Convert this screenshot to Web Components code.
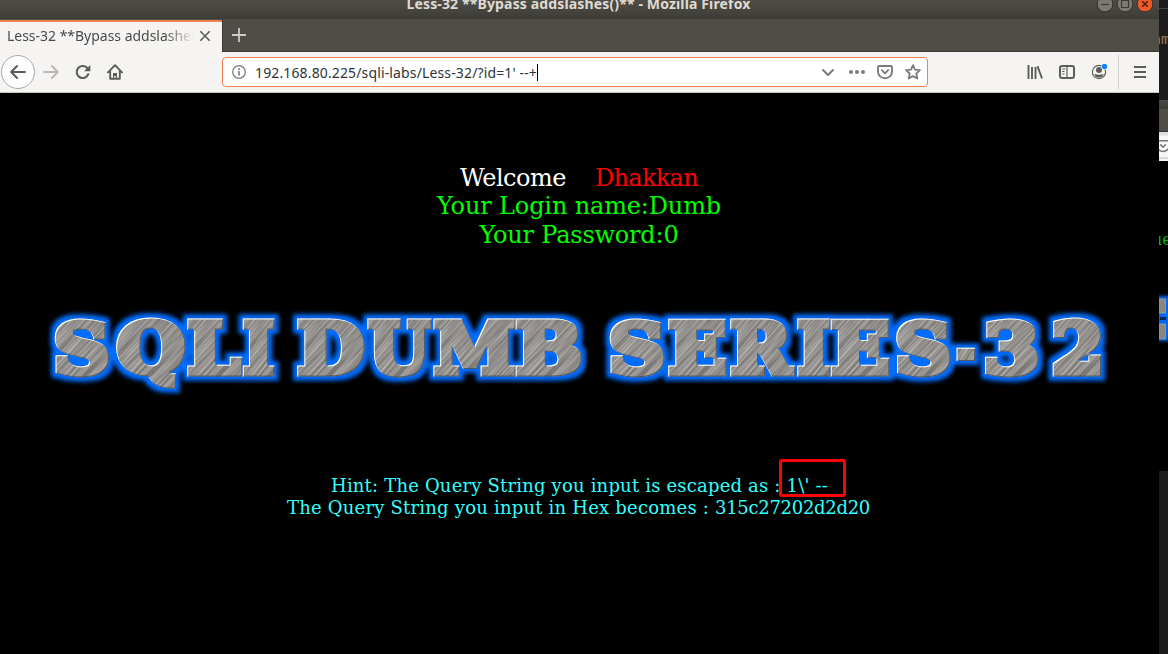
<!DOCTYPE html>
<html lang="en"><head><meta charset="utf-8"><title>Less-32 **Bypass addslashes()**</title>
<style>html,body{margin:0;background:#000;overflow:hidden}body{font-family:"Noto Sans","Open Sans",sans-serif}</style></head>
<body><lab-desktop></lab-desktop>
<script>
const define = (name, html, ready) => customElements.define(name, class extends HTMLElement {
  connectedCallback() {
    if (this.shadowRoot) return;
    const t = document.createElement('template'); t.innerHTML = html;
    this.attachShadow({mode:'open'}).append(t.content.cloneNode(true));
    if (ready) ready(this, this.shadowRoot);
  }
});

/* One line of text, tracked so that it fills the given width. */
define('fit-line', `<style>:host{display:inline-block;white-space:pre;flex:none}span{display:inline-block;white-space:pre}</style><span><slot></slot></span>`, (host, root) => {
  const s = root.querySelector('span'), want = +host.getAttribute('width');
  s.style.letterSpacing = ((want - s.getBoundingClientRect().width) / host.textContent.length) + 'px';
});

define('title-bar', `<style>
:host{display:grid;grid-template-columns:1fr auto;height:19px;background:linear-gradient(#504d46,#3d3c37);overflow:hidden;position:relative}
.name{grid-area:1/1/2/3;justify-self:center;margin:-7px 2px 0 0;font-weight:700;font-size:14px;line-height:22px;color:#dfdbd2}
.btns{grid-area:1/2;display:flex;gap:2px;margin:-5px 5px 0 0}
svg{width:18px;height:18px;display:block}
</style><div class="name"><fit-line width="344">Less-32 **Bypass addslashes()** - Mozilla Firefox</fit-line></div>
<div class="btns">
<svg viewBox="0 0 18 18"><circle cx="9" cy="9" r="7.9" fill="#7b7974" stroke="#33322e"/><path d="M5 9.5h8" stroke="#3c3b37" stroke-width="1.2"/></svg>
<svg viewBox="0 0 18 18"><circle cx="9" cy="9" r="7.9" fill="#7b7974" stroke="#33322e"/><path d="M5.5 5.5h7v7h-7z" fill="none" stroke="#3c3b37" stroke-width="1.2"/></svg>
<svg viewBox="0 0 18 18"><circle cx="9" cy="9" r="7.9" fill="#ee5b2b" stroke="#33322e"/><path d="m6.2 6.2 5.6 5.6m0-5.6-5.6 5.6" stroke="#492012" stroke-width="1.5"/></svg></div>`);

define('tab-strip', `<style>
:host{display:flex;height:33px;background:#504d46;box-shadow:inset 0 -1px #3c3b37}
.tab{width:222px;box-sizing:border-box;border-top:2px solid #f1814f;background:#f5f4f2;display:flex;align-items:center;padding-left:7px;margin-top:1px;height:32px}
.clip{width:187px;overflow:hidden;font-size:14px;line-height:20px;margin-top:-2px;color:#4b4b4b;-webkit-mask-image:linear-gradient(90deg,#000 158px,transparent 187px);mask-image:linear-gradient(90deg,#000 158px,transparent 187px)}
.x{width:12px;height:12px;margin:-2px 0 0 5px;flex:none}.new{border-left:1px solid #3c3b37;padding:8px 0 0 8px}.new svg{display:block}
</style><div class="tab"><div class="clip"><fit-line width="199">Less-32 **Bypass addslashes()</fit-line></div>
<svg class="x" viewBox="0 0 12 12"><path d="m1.3 1.3 9.4 9.4m0-9.4-9.4 9.4" stroke="#5c5c59" stroke-width="1.6"/></svg></div>
<div class="new"><svg width="16" height="16"><path d="M8 1v14M1 8h14" stroke="#cfcbc2" stroke-width="1.8"/></svg></div>`);

define('address-bar', `<style>
:host{display:flex;align-items:center;box-sizing:border-box;width:706px;height:30px;border:1px solid #f1814f;border-radius:4px;background:#fff;padding:0 6px 0 9px;flex:none}
.url{font-size:14px;line-height:20px;color:#2e3436;margin:1px 0 0 9px}.caret{width:1px;height:17px;background:#000}
.icons{margin-left:auto;display:flex;gap:12px;align-items:center}svg{display:block;flex:none}
</style>
<svg width="14" height="14" viewBox="0 0 14 14"><circle cx="7" cy="7" r="6.3" fill="none" stroke="#77777a" stroke-width="1.2"/><path d="M7 6v4.6M7 3.2v1.7" stroke="#77777a" stroke-width="1.6"/></svg>
<fit-line class="url" width="282">192.168.80.225/sqli-labs/Less-32/?id=1' --+</fit-line><span class="caret"></span>
<div class="icons" >
<svg width="16" height="16" viewBox="0 0 16 16" fill="none"><path d="m4 6 5 5 5-5" stroke="#7b7b7d" stroke-width="2" stroke-linecap="round" stroke-linejoin="round"/></svg>
<svg width="18" height="16" viewBox="0 0 18 16" fill="#7b7b7d"><circle cx="4" cy="8" r="2"/><circle cx="10" cy="8" r="2"/><circle cx="16" cy="8" r="2"/></svg>
<svg width="16" height="16" viewBox="0 0 16 16" fill="none" stroke="#7b7b7d" stroke-width="1.9" stroke-linejoin="round" stroke-linecap="round"><path d="M2.2 2h11.6q1.2 0 1.2 1.2V7.5C15 11.500 11.800 14.200 8 14.200S1 11.500 1 7.500V3.200Q1 2 2.200 2z"/><path d="m4.800 6.200 3.200 3.200 3.200-3.200"/></svg>
<svg width="16" height="16" viewBox="0 0 16 16" fill="none" stroke="#7b7b7d" stroke-width="1.8" stroke-linejoin="round"><path d="m8 1.200 2 4.500 4.900.5-3.600 3.300 1 5L8 12.100l-4.300 2.400 1-5L1.100 6.200l4.900-.5z"/></svg></div>`);

define('nav-bar', `<style>
:host{display:flex;align-items:center;height:41px;box-sizing:border-box;background:#f5f4f2;border-bottom:1px solid #cbc6c0;padding-left:1px}
.left{display:flex;align-items:center;width:221px}.back{box-sizing:border-box;width:34px;height:34px;border:1px solid #aaa;border-radius:50%;background:#fdfdfd;display:grid;place-items:center}
svg{display:block;flex:none}.right{margin-left:auto;display:flex;align-items:center;height:34px;padding-right:11px}
.sep{width:1px;height:34px;background:#d2d0cd;margin:0 13px 0 10px}
</style>
<div class="left"><span class="back"><svg width="16" height="16" viewBox="0 0 16 16" fill="none" stroke="#5c5c59" stroke-width="2" stroke-linecap="round" stroke-linejoin="round"><path d="M15 8H1.500M7 2 1.200 8 7 14"/></svg></span>
<svg style="margin-left:8px" width="16" height="16" viewBox="0 0 16 16" fill="none" stroke="#bab9b7" stroke-width="2" stroke-linecap="round" stroke-linejoin="round"><path d="M1 8h13.500M9 2l5.800 6L9 14"/></svg>
<svg style="margin-left:16px" width="16" height="16" viewBox="0 0 16 16"><path d="M13.300 10.200A6 6 0 1 1 12 3.800l1.300 1.300" fill="none" stroke="#5c5c59" stroke-width="2.100" stroke-linecap="round"/><path d="M15.300 1v6.300H9z" fill="#5c5c59"/></svg>
<svg style="margin-left:16px" width="16" height="16" viewBox="0 0 16 16"><path d="M1 8.300 8 1.200l7 7.100M3.200 7.500V14.800h9.600V7.500" fill="none" stroke="#5c5c59" stroke-width="1.900" stroke-linecap="round" stroke-linejoin="round"/><path d="M6 14V9h4v5H8.800v-2H7.200v2z" fill="#5c5c59"/></svg></div>
<address-bar></address-bar>
<div class="right">
<svg width="16" height="16" viewBox="0 0 16 16"><path d="M1.500 1v14M5 3v12M8.500 3v12" stroke="#5c5c59" stroke-width="1.900"/><path d="m10.500 2.200 4.500 12.300" stroke="#5c5c59" stroke-width="1.900"/></svg>
<svg style="margin-left:16px" width="16" height="16" viewBox="0 0 16 16"><rect x="1" y="2" width="14" height="12" rx="2" fill="none" stroke="#5c5c59" stroke-width="2"/><path d="M8 2v12" stroke="#5c5c59" stroke-width="1.200"/><path d="M3.200 5h3.300M3.200 7.500h2.300M3.200 10h2.300" stroke="#5c5c59"/></svg>
<svg style="margin-left:16px" width="17" height="16" viewBox="0 0 17 16"><circle cx="8" cy="8" r="6.600" fill="none" stroke="#5c5c59" stroke-width="1.200"/><circle cx="8" cy="6" r="3" fill="#5c5c59"/><path d="M3.500 10q4.500 1.500 9 0-.6 3.500-4.500 3.500T3.500 10z" fill="#5c5c59"/><circle cx="13.500" cy="2.500" r="3.200" fill="#f5f4f2"/><circle cx="13.500" cy="2.500" r="2.700" fill="#0a84ff"/></svg>
<span class="sep"></span>
<svg width="16" height="16"><path d="M2 3h12M2 8h12M2 13h12" stroke="#5c5c59" stroke-width="2"/></svg></div>`);

/* Brushed steel lettering; each glyph is stretched to its own slab width. */
const LETTERS = [['S',54,110],['Q',115,186],['L',187,243],['I',242.5,275],['D',297,365.5],['U',367,432.5],['M',432.5,516],['B',515.5,582],['S',609,665.5],['E',668,727],['R',730,796],['I',797,831],['E',830.500,890],['S',895.5,951.5],['-',955,977],['3',984,1038.5],['2',1052,1102]];
const WEIGHT = 7, SIZE = 69.5;
define('steel-logo', `<style>:host{display:block;height:100px;overflow:hidden}svg{display:block}text{font:bold 69.5px "DejaVu Serif",serif}</style>
<svg width="1159" height="100" viewBox="0 0 1159 100"><defs>
<filter id="grain" x="0" y="0" width="100%" height="100%" color-interpolation-filters="sRGB"><feTurbulence type="fractalNoise" baseFrequency=".6 .02" numOctaves="2" seed="4"/><feColorMatrix values=".45 0 0 0 .35  .45 0 0 0 .34  .45 0 0 0 .33  0 0 0 0 1"/></filter>
<pattern id="steel" width="1300" height="1300" patternUnits="userSpaceOnUse" patternTransform="rotate(40) translate(-100 -800)"><rect width="1300" height="1300" fill="#8c8987" filter="url(#grain)"/></pattern>
<filter id="glow" x="0" y="0" width="1159" height="100" filterUnits="userSpaceOnUse" color-interpolation-filters="sRGB">
<feMorphology in="SourceAlpha" operator="dilate" radius="4" result="fat"/><feGaussianBlur in="fat" stdDeviation="2" result="soft"/><feFlood flood-color="#006dff"/><feComposite in2="soft" operator="in" result="halo"/><feMerge><feMergeNode in="halo"/><feMergeNode in="SourceGraphic"/></feMerge></filter>
<filter id="bevel" x="-10%" y="-10%" width="125%" height="125%" color-interpolation-filters="sRGB">
<feOffset in="SourceAlpha" dx="1" dy="1" result="o1"/><feFlood flood-color="#fff"/><feComposite in2="SourceAlpha" operator="in" result="w"/><feComposite in="w" in2="o1" operator="out" result="light"/>
<feOffset in="SourceAlpha" dx="-1" dy="-1" result="o2"/><feFlood flood-color="#3b4658" flood-opacity=".75"/><feComposite in2="SourceAlpha" operator="in" result="d"/><feComposite in="d" in2="o2" operator="out" result="shade"/>
<feMerge><feMergeNode in="SourceGraphic"/><feMergeNode in="shade"/><feMergeNode in="light"/></feMerge></filter></defs>
<g id="row" filter="url(#glow)"></g></svg>`, (host, root) => {
  const ns = 'http://www.w3.org/2000/svg', row = root.querySelector('#row'), c = document.createElement('canvas').getContext('2d');
  c.font = `bold ${SIZE}px "DejaVu Serif"`;
  for (const [ch, l, r] of LETTERS) {
    const m = c.measureText(ch), w = m.actualBoundingBoxRight + m.actualBoundingBoxLeft, k = (r - l) / (w + WEIGHT);
    const layer = document.createElementNS(ns, 'g'), t = document.createElementNS(ns, 'text');
    t.textContent = ch; t.setAttribute('fill', 'url(#steel)'); t.setAttribute('stroke', 'url(#steel)');
    t.setAttribute('stroke-width', ch === '-' ? 4 : WEIGHT); t.setAttribute('stroke-miterlimit', '2');
    t.setAttribute('transform', `translate(${l + (m.actualBoundingBoxLeft + WEIGHT / 2) * k} 72.800) scale(${k} 1)`);
    layer.setAttribute('filter', 'url(#bevel)');
    layer.append(t); row.append(layer);
  }
});

define('lesson-page', `<style>
:host{display:flex;flex-direction:column;height:561px;background:#000;font-family:"DejaVu Serif",serif;overflow:hidden;box-sizing:border-box;padding-top:70px}
.who{display:flex;flex-direction:column;align-items:center;font-size:24px;line-height:29px;height:87px;color:#0f0}
.row{display:flex;gap:29px;height:29px;line-height:30px;margin-right:1px}.w{color:#fff}.r{color:#f00}.who>fit-line{margin-right:1px}steel-logo{margin-top:50px;flex:none}
.hint{display:grid;font-size:18px;line-height:22px;color:#3ff;margin-top:75px;position:relative;grid-template-rows:22px 22px}
.hint div{white-space:nowrap;display:flex}.one{padding-left:331px}.two{padding-left:287px}
.mark{position:absolute;left:779px;top:-16px;width:67px;height:38px;box-sizing:border-box;border:3px solid #f00;border-radius:3px}
</style><div class="who"><div class="row"><fit-line class="w" width="106">Welcome</fit-line><fit-line class="r" width="103">Dhakkan</fit-line></div><fit-line width="284">Your Login name:Dumb</fit-line><fit-line width="199">Your Password:0</fit-line></div>
<steel-logo></steel-logo>
<div class="hint"><div class="one"><fit-line width="497">Hint: The Query String you input is escaped as : 1\\' --</fit-line></div><div class="two"><fit-line width="428">The Query String you input in Hex becomes : </fit-line><fit-line width="155">315c27202d2d20</fit-line></div><span class="mark"></span></div>`);

/* The sliver of the windows lying behind the browser. */
define('window-sliver', `<style>
:host{display:flex;flex-direction:column;width:9px;height:654px;background:#000;overflow:hidden}
.term{height:100px;background:linear-gradient(#1c1c1c 8px,#444 8px,#444 9px,#1c1c1c 9px);box-sizing:border-box;padding-top:31px}
.term span{display:block;margin-left:-7px;font:15px/20px "Liberation Mono",monospace;color:#9a8257;white-space:pre}
.bar{height:32px;background:linear-gradient(#4b4944,#3b3a36 9px,#504d46 9px,#504d46 31px,#333 31px)}
.nav{height:29px;background:linear-gradient(#ddd 3px,#f7f7f7 4px,#f7f7f7 25px,#bbb 26px,#f5f4f2 27px);overflow:hidden}
.nav svg{display:block;margin:7px 0 0 -3px}.page{height:310px;overflow:hidden}.page span{display:block;margin:68px 0 0 -7px;font:16px/22px "DejaVu Serif",serif;color:#0b0;white-space:pre}
.rest{flex:1;background:#1c1c1c}.page svg{display:block;margin-top:42px}
</style><div class="term"><span>nm</span></div><div class="bar"></div><div class="nav"><svg width="14" height="14" viewBox="0 0 16 16" fill="none" stroke="#777" stroke-width="1.800"><path d="M1 2h14v5.500C15 11.500 11.800 14.200 8 14.200S1 11.500 1 7.500z"/><path d="m4.800 6.200 3.200 3.200 3.200-3.200"/></svg></div>
<div class="page"><span>ue</span><svg width="9" height="54"><defs><filter id="b" x="-10" y="-5" width="40" height="64" filterUnits="userSpaceOnUse"><feGaussianBlur stdDeviation="1.500"/></filter></defs><path d="M-4 3H14V48H-4z" fill="#0068f2" filter="url(#b)"/><path d="M1 25.500h6" stroke="#00235a" stroke-width="3"/><path d="M0 6h6.500v14H0zM0 31h6.500v15H0z" fill="#898684" stroke="#8aa" stroke-width=".8"/></svg></div><div class="rest"></div>`);

define('browser-window', `<style>:host{display:flex;flex-direction:column;width:1159px;height:654px;overflow:hidden}title-bar,tab-strip,nav-bar,lesson-page{flex:none}</style><title-bar></title-bar><tab-strip></tab-strip><nav-bar></nav-bar><lesson-page></lesson-page>`);
define('lab-desktop', `<style>:host{display:grid;grid-template-columns:1159px 9px;height:654px;overflow:hidden}</style><browser-window></browser-window><window-sliver></window-sliver>`);
</script></body></html>
